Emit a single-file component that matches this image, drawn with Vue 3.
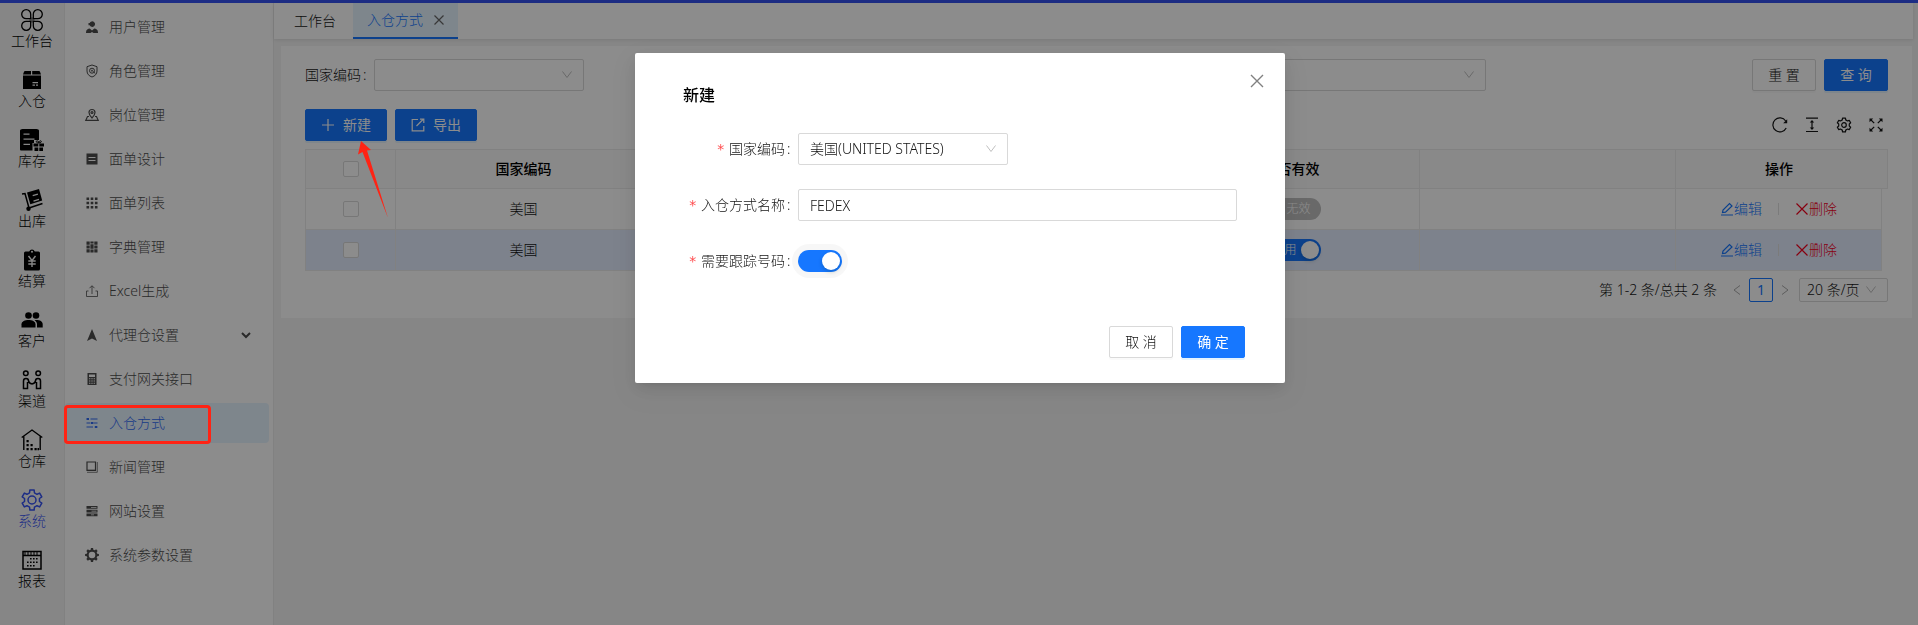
<script setup>
import { ref } from 'vue'

function gear(c, teeth, outer, inner) {
  const pts = []
  const step = (Math.PI * 2) / teeth
  for (let i = 0; i < teeth; i++) {
    const a = i * step - Math.PI / 2
    for (const [offset, r] of [[-0.31, inner], [-0.2, outer], [0.2, outer], [0.31, inner]]) {
      const t = a + offset * step
      pts.push(`${(c + r * Math.cos(t)).toFixed(2)} ${(c + r * Math.sin(t)).toFixed(2)}`)
    }
  }
  return `M${pts.join('L')}Z`
}

const railItems = [
  {
    label: '工作台',
    icon: '<g fill="none" stroke="currentColor" stroke-width="1.3"><path d="M9.700 9.700H5.300a4.500 4.500 0 1 1 4.400-4.400z"/><path d="M12.300 9.700V5.300a4.500 4.500 0 1 1 4.400 4.400z"/><path d="M12.300 12.300h4.400a4.500 4.500 0 1 1-4.400 4.400z"/><path d="M9.700 12.300v4.400a4.500 4.500 0 1 1-4.400-4.400z"/></g><path d="M8.500 11h5M11 8.500v5" stroke="currentColor" stroke-width="2" opacity=".4"/>'
  },
  {
    label: '入仓',
    icon: '<path fill="currentColor" fill-rule="evenodd" d="M4 2h6v3.500H2L3 2.700Q3.300 2 4 2zM11.200 2H18q.7 0 1 .7l1 2.800h-8.800zM2 6.500h18V20H2zM11.500 13v1.200H17V13zm0 2.600v1.200H14v-1.200zm3.500 0v1.200h2v-1.200z"/>'
  },
  {
    label: '库存',
    icon: '<path fill="currentColor" fill-rule="evenodd" d="M1.500 0h14Q18 0 18 1.500V11h-5v3h-1.500v7.500H0q-1 0-1-1V1.500Q-1 0 1.500 0zM2.500 4.500v1.300h6V4.500zm0 5v1.300h11V9.500zm0 5.200V16H9v-1.300z"/><path fill="currentColor" d="M12.500 14.500h4.800v3h-4.800zM18.300 14.500H23v3h-4.700zM13.500 18.400h3.800V22h-3.800zM18.300 18.400H22V22h-3.700z"/><path d="M17.800 14c-3.500 0-3-3-.9-2 .8.500.9 2 .9 2s.1-1.500.9-2c2.100-1 2.600 2-.9 2z" fill="none" stroke="currentColor"/>'
  },
  {
    label: '出库',
    icon: '<g fill="none" stroke="currentColor" stroke-width="1.500"><path d="M1 5l3-.5 4 14.500"/><path d="M8 19l13.500-4.500"/></g><circle cx="7.500" cy="19.700" r="2.200" fill="currentColor"/><path fill="currentColor" fill-rule="evenodd" d="M6 3.500L18 0l3.200 11.500L9.300 15.200zM11.500 6l.4 1.300 5.200-1.600-.4-1.300zM12.300 11.500l.4 1.200 5.500-1.700-.4-1.200z"/>'
  },
  {
    label: '结算',
    icon: '<path fill="currentColor" d="M4.500 2.500h3.700a3 3 0 0 1 5.600 0h3.700q1.500 0 1.500 1.500v16q0 1.500-1.500 1.500h-13Q3 21.500 3 20V4q0-1.500 1.500-1.500z"/><circle cx="11" cy="2.700" r="1" fill="#f5f5f5"/><path d="M7.500 7l3.500 4.500L14.500 7M11 11.500V18M7.300 12h7.400M7.300 15h7.400" fill="none" stroke="#f5f5f5" stroke-width="1.400"/>'
  },
  {
    label: '客户',
    icon: '<g fill="currentColor"><circle cx="7.500" cy="6.500" r="3.300"/><circle cx="15" cy="6.500" r="3.300"/><path d="M.5 18.500v-3.300c0-5.600 14-5.600 14 0v3.300z"/><path d="M13.500 11.200c4.600-.6 8.200 1 8.200 4v3.300H16v-3.300c0-1.700-1-3.100-2.500-4z"/></g>'
  },
  {
    label: '渠道',
    icon: '<g fill="none" stroke="currentColor" stroke-width="1.500"><circle cx="4.800" cy="4.300" r="2.300"/><circle cx="17.200" cy="4.300" r="2.300"/><path d="M6.500 13v6.500h-4V12c0-3.300 5-3.300 5 0 .4 2 1.500 2.500 3.500 3M15.500 13v6.500h4V12c0-3.300-5-3.300-5 0-.4 2-1.500 2.500-3.500 3"/></g>'
  },
  {
    label: '仓库',
    icon: '<path d="M.7 8.500L11 1l10.300 7.500M2.800 7.500V21M19.200 7.500V21" fill="none" stroke="currentColor" stroke-width="1.400"/><path fill="currentColor" d="M5.500 11h2.200v2.200H5.500zM5.500 15h2.200v2.200H5.500zM9.500 15h2.200v2.200H9.500zM5.500 19h2.200v2.200H5.500zM9.500 19h2.200v2.200H9.500zM13.500 19h2.200v2.200h-2.200zM16.500 19H18v2.200h-1.500z"/>'
  },
  {
    label: '系统',
    active: true,
    icon: `<g fill="none" stroke="currentColor" stroke-width="1.500" stroke-linejoin="round"><path d="${gear(11, 6, 10.3, 7.6)}"/><circle cx="11" cy="11" r="4"/></g>`
  },
  {
    label: '报表',
    icon: '<g fill="none" stroke="currentColor" stroke-width="1.500"><path d="M2 2.500h18v17.500H2zM2 6.500h18"/><path d="M4 3v3M7 3v3M10 3v3M13 3v3M16 3v3" stroke-width="1"/></g><path fill="currentColor" d="M9 9h1.600v1.600H9zM12 9h1.600v1.600H12zM15 9h1.600v1.600H15zM6 12.500h1.600v1.600H6zM9 12.500h1.600v1.600H9zM12 12.500h1.600v1.600H12zM15 12.500h1.600v1.600H15zM6 16h1.600v1.600H6zM9 16h1.600v1.600H9zM12 16h1.600v1.600H12z"/>'
  }
]

const menuItems = [
  {
    label: '用户管理',
    icon: '<path fill="currentColor" d="M3.500 3h1.200a2.800 2.800 0 1 1 0 2.200H3.500zM1 12.500c0-3 2-4 3.700-4L7 10.500l2.300-2c1.700 0 3.700 1 3.700 4v.5H8.500l-1.500-1-1.500 1H1z"/>'
  },
  {
    label: '角色管理',
    icon: '<g fill="none" stroke="currentColor"><path d="M7 1l5 1.700V7c0 3-2 5-5 6-3-1-5-3-5-6V2.700z"/><circle cx="7" cy="6.700" r="2.500"/><circle cx="7" cy="6.700" r=".6"/><path d="M8.500 7.500l1.500 2"/></g>'
  },
  {
    label: '岗位管理',
    icon: '<g fill="none" stroke="currentColor" stroke-width="1.200"><path d="M7 10C4.500 7.500 4 6 4 4.500a3 3 0 0 1 6 0C10 6 9.500 7.500 7 10z"/><circle cx="7" cy="4.500" r="1"/><path d="M4 8.500H2.500L.8 12.300h12.400l-1.700-3.800H10"/></g>'
  },
  {
    label: '面单设计',
    icon: '<path fill="currentColor" fill-rule="evenodd" d="M1.500 1.500h11v11h-11zM3.500 5v1h7V5zm0 3v1h7V8z"/>'
  },
  {
    label: '面单列表',
    icon: '<path fill="currentColor" d="M1.500 1.500h2.600v2.600H1.500zM5.700 1.500h2.600v2.600H5.700zM9.900 1.500h2.600v2.600H9.900zM1.500 5.700h2.600v2.600H1.500zM5.700 5.700h2.600v2.600H5.700zM9.900 5.700h2.600v2.600H9.900zM1.500 9.900h2.600v2.600H1.500zM5.700 9.900h2.600v2.600H5.700zM9.900 9.900h2.600v2.600H9.900z"/>'
  },
  {
    label: '字典管理',
    icon: '<path fill="currentColor" d="M1.500 1.500h3.200v3.200H1.500zM5.400 1.500h3.200v2H5.400zM9.300 1.500h3.200v3.200H9.300zM1.500 5.400h3.200v3.200H1.500zM5.400 4.300h3.200v4.500H5.400zM9.300 5.400h3.200v3.200H9.300zM1.500 9.300h3.200v3.200H1.500zM5.400 9.600h3.200v2.900H5.400zM9.300 9.300h3.200v3.200H9.300z"/>'
  },
  {
    label: 'Excel生成',
    icon: '<path d="M7 10V2M4.500 4.200L7 1.700l2.500 2.500M3.500 7h-2v5.500h11V7h-2" fill="none" stroke="currentColor" opacity=".8"/>'
  },
  {
    label: '代理仓设置',
    expandable: true,
    icon: '<path fill="currentColor" d="M7 1l5 12-5-2.500L2 13z"/>'
  },
  {
    label: '支付网关接口',
    icon: '<path fill="currentColor" fill-rule="evenodd" d="M2.500 1h9v12h-9zM4 2.500V5h6V2.500zM4 6.300v1h1.400v-1zm2.300 0v1h1.400v-1zm2.300 0v1H10v-1zM4 8.500v1h1.400v-1zm2.300 0v1h1.400v-1zm2.300 0v1H10v-1zM4 10.700v1h1.400v-1zm2.300 0v1h1.400v-1zm2.300 0v1H10v-1z"/>'
  },
  {
    label: '入仓方式',
    active: true,
    icon: '<path d="M1.500 3h2M5.500 3h7M1.500 7h4M8.500 7h4M1.500 11h6.500M10 11h2.500" stroke="currentColor"/><path fill="currentColor" d="M1.700 2h2.300v2H1.700zM6 6h2.300v2H6zM9.800 10h2.300v2H9.800z"/>'
  },
  {
    label: '新闻管理',
    icon: '<path d="M2 2h8.500v8.500H2z" fill="none" stroke="currentColor" stroke-width="1.200"/><path d="M2 12.300h10.300V2M2 10h8.500" fill="none" stroke="currentColor" opacity=".7"/>'
  },
  {
    label: '网站设置',
    icon: '<path fill="currentColor" fill-rule="evenodd" d="M1.500 2h11v2.800h-11zM6 3v.8h5.500V3zM1.500 5.700h11v2.800h-11zM6.500 6.700v.8h5v-.8zM1.500 9.400h11v2.800h-11zM6 10.400v.8h3v-.8z"/>'
  },
  {
    label: '系统参数设置',
    icon: `<path fill="currentColor" fill-rule="evenodd" d="${gear(7, 8, 7, 5.4)}M7 3.700a3.300 3.300 0 1 0 0 6.600a3.300 3.300 0 1 0 0-6.600Z"/>`
  }
]

const rows = ref([
  { id: 1, country: '美国', enabled: false },
  { id: 2, country: '美国', enabled: true }
])

const form = ref({ country: 'US', name: 'FEDEX', tracking: true })
const toolbarGear = gear(8, 6, 7, 5.4)
</script>

<template>
  <div class="page">
    <div class="topbar"></div>
    <div class="shell">
      <nav class="rail" aria-label="主导航">
        <a v-for="item in railItems" :key="item.label" href="#" class="rail-item" :class="{ active: item.active }">
          <svg class="rail-icon" viewBox="0 0 22 22" aria-hidden="true" v-html="item.icon"></svg>
          <span>{{ item.label }}</span>
        </a>
      </nav>

      <nav class="menu" aria-label="系统菜单">
        <a v-for="item in menuItems" :key="item.label" href="#" class="menu-item" :class="{ active: item.active }">
          <svg class="menu-icon" viewBox="0 0 14 14" aria-hidden="true" v-html="item.icon"></svg>
          <span class="menu-label">{{ item.label }}</span>
          <svg v-if="item.expandable" class="menu-arrow" viewBox="0 0 10 10" aria-hidden="true">
            <path d="M1 3l4 4 4-4" fill="none" stroke="currentColor" stroke-width="2" />
          </svg>
        </a>
      </nav>

      <main class="main">
        <div class="tabs">
          <a href="#" class="tab">工作台</a>
          <div class="tab tab-active">
            <a href="#">入仓方式</a>
            <button type="button" class="tab-close" aria-label="关闭标签">
              <svg viewBox="0 0 10 10"><path d="M.5 .5l9 9M9.500 .5l-9 9" stroke="currentColor" stroke-width="1.200" /></svg>
            </button>
          </div>
        </div>

        <section class="card">
          <form class="filters" @submit.prevent>
            <div class="field">
              <label for="filter-country">国家编码</label><span class="colon">:</span>
              <div class="select-box">
                <select id="filter-country"><option value=""></option></select>
                <svg class="chevron" viewBox="0 0 10 8"><path d="M.5 .5L5 6.500 9.500 .5" /></svg>
              </div>
            </div>
            <div class="select-box filter-second">
              <select aria-label="是否有效"><option value=""></option></select>
              <svg class="chevron" viewBox="0 0 10 8"><path d="M.5 .5L5 6.500 9.500 .5" /></svg>
            </div>
            <div class="buttons">
              <button type="reset" class="btn">重 置</button>
              <button type="submit" class="btn primary">查 询</button>
            </div>
          </form>

          <div class="toolbar">
            <div class="buttons">
              <button type="button" class="btn primary with-icon">
                <svg viewBox="0 0 14 14"><path d="M7 1v12M1 7h12" /></svg>新建
              </button>
              <button type="button" class="btn primary with-icon">
                <svg viewBox="0 0 14 14"><path d="M7 1.500H1.200v11.300h11.600V8M5.500 8l6.500-6.500M9 1.200h3.800V5" /></svg>导出
              </button>
            </div>
            <div class="tools">
              <button type="button" aria-label="刷新">
                <svg viewBox="0 0 16 16"><path d="M14.200 11A7 7 0 1 1 13.700 4" /><path d="M15.200 2.200v4h-4z" fill="currentColor" stroke="none" /></svg>
              </button>
              <button type="button" aria-label="密度">
                <svg viewBox="0 0 16 16"><path d="M2 1.200h12M2 14.500h12M8 4v8" /><path d="M5.800 5.500L8 3l2.200 2.500zM5.800 10.500L8 13l2.200-2.500z" fill="currentColor" stroke="none" /></svg>
              </button>
              <button type="button" aria-label="列设置">
                <svg viewBox="0 0 16 16"><path :d="toolbarGear" stroke-linejoin="round" /><circle cx="8" cy="8" r="2.300" /></svg>
              </button>
              <button type="button" aria-label="全屏">
                <svg viewBox="0 0 16 16"><path d="M2.500 2.500l3.700 3.700M13.500 2.500L9.800 6.200M2.500 13.500l3.700-3.700M13.500 13.500L9.800 9.800" /><path d="M1.500 1.500h3.700L1.500 5.200zM14.500 1.500v3.700l-3.700-3.700zM1.500 14.500v-3.700l3.700 3.700zM14.500 14.500h-3.700l3.700-3.700z" fill="currentColor" stroke="none" /></svg>
              </button>
            </div>
          </div>

          <table class="table">
            <colgroup>
              <col class="col-check" />
              <col /><col /><col /><col /><col />
              <col class="col-actions" />
              <col class="col-gutter" />
            </colgroup>
            <thead>
              <tr>
                <th><input type="checkbox" class="check" aria-label="全选" /></th>
                <th>国家编码</th>
                <th></th>
                <th></th>
                <th>是否有效</th>
                <th></th>
                <th class="no-line">操作</th>
                <th></th>
              </tr>
            </thead>
            <tbody>
              <tr v-for="row in rows" :key="row.id" :class="{ hovered: row.id === 2 }">
                <td><input type="checkbox" class="check" :aria-label="'选择第 ' + row.id + ' 行'" /></td>
                <td>{{ row.country }}</td>
                <td></td>
                <td></td>
                <td>
                  <label class="switch" :class="{ on: row.enabled }">
                    <input v-model="row.enabled" type="checkbox" role="switch" />
                    <span class="switch-text">{{ row.enabled ? '启用' : '无效' }}</span>
                  </label>
                </td>
                <td></td>
                <td>
                  <div class="actions">
                    <a href="#" class="edit">
                      <svg viewBox="0 0 14 14"><path d="M1 13h12M2.500 10.500L3 8l6.500-6.500L12 4 5.500 10.200z" /></svg>编辑
                    </a>
                    <span class="divider"></span>
                    <a href="#" class="delete">
                      <svg viewBox="0 0 14 14"><path d="M1.500 1.500l11 11M12.500 1.500l-11 11" /></svg>删除
                    </a>
                  </div>
                </td>
                <td class="gutter"></td>
              </tr>
            </tbody>
          </table>

          <div class="pagination">
            <span class="total">第 1-2 条/总共 2 条</span>
            <button type="button" class="page-step" aria-label="上一页">
              <svg viewBox="0 0 8 10"><path d="M7 .5L1 5l6 4.500" /></svg>
            </button>
            <button type="button" class="page-current">1</button>
            <button type="button" class="page-step" aria-label="下一页">
              <svg viewBox="0 0 8 10"><path d="M1 .5L7 5 1 9.500" /></svg>
            </button>
            <div class="select-box page-size">
              <select aria-label="每页条数"><option>20 条/页</option></select>
              <svg class="chevron" viewBox="0 0 10 8"><path d="M.5 .5L5 6.500 9.500 .5" /></svg>
            </div>
          </div>
        </section>
      </main>
    </div>

    <div class="mask">
      <div class="modal" role="dialog" aria-modal="true" aria-labelledby="modal-title">
        <h2 id="modal-title">新建</h2>
        <button type="button" class="modal-close" aria-label="关闭">
          <svg viewBox="0 0 12 12"><path d="M0 0l12 12M12 0L0 12" stroke="currentColor" stroke-width="1.400" /></svg>
        </button>
        <form class="form" @submit.prevent>
          <div class="form-label"><i>*</i><label for="country">国家编码</label><span class="colon">:</span></div>
          <div class="select-box">
            <select id="country" v-model="form.country"><option value="US">美国(UNITED STATES)</option></select>
            <svg class="chevron" viewBox="0 0 10 8"><path d="M.5 .5L5 6.500 9.500 .5" /></svg>
          </div>
          <div class="form-label"><i>*</i><label for="name">入仓方式名称</label><span class="colon">:</span></div>
          <input id="name" v-model="form.name" type="text" class="text-input" />
          <div class="form-label"><i>*</i><label for="tracking">需要跟踪号码</label><span class="colon">:</span></div>
          <div class="switch plain" :class="{ on: form.tracking }">
            <input id="tracking" v-model="form.tracking" type="checkbox" role="switch" />
          </div>
        </form>
        <div class="buttons modal-footer">
          <button type="button" class="btn">取 消</button>
          <button type="button" class="btn primary">确 定</button>
        </div>
      </div>
    </div>

    <div class="callout-box"></div>
    <svg class="callout-arrow" viewBox="0 0 32 80" aria-hidden="true">
      <path d="M4 1L14 10 10 10.500 31 78 5.500 12 1 14.500z" fill="#ff2314" />
    </svg>
  </div>
</template>

<style>
body {
  margin: 0;
}
</style>

<style scoped>
.page {
  position: relative;
  display: flex;
  flex-direction: column;
  min-height: 100vh;
  background: #f5f5f5;
  color: #141414;
  font-family: "Noto Sans", "Noto Sans CJK SC", sans-serif;
  font-size: 14px;
  font-weight: 300;
  line-height: 20px;
}
.page * {
  box-sizing: border-box;
}
a {
  color: inherit;
  text-decoration: none;
}
button,
input,
select {
  margin: 0;
  color: inherit;
  font: inherit;
}
button {
  padding: 0;
  border: 0;
  background: none;
}
svg {
  display: block;
  flex: none;
  overflow: visible;
}
.topbar {
  height: 3px;
  background: #3552f2;
}
.shell {
  display: flex;
  flex: 1;
}
.rail {
  width: 64px;
  padding-top: 6px;
  color: #000;
}
.rail-item {
  display: flex;
  flex-direction: column;
  align-items: center;
  height: 60px;
}
.rail-item.active {
  color: #3552f2;
}
.rail-icon {
  width: 22px;
  height: 22px;
}
.menu {
  width: 210px;
  padding: 4px 4px 0 0;
  border: solid #ebebeb;
  border-width: 0 1px;
  background: #fff;
}
.menu-item {
  display: flex;
  align-items: center;
  height: 40px;
  margin-bottom: 4px;
  padding: 0 18px 0 20px;
  border-radius: 4px;
  color: #4d4d4d;
}
.menu-item.active {
  background: #e6f4ff;
  color: #2f6af5;
}
.menu-icon {
  width: 14px;
  height: 14px;
  margin-right: 10px;
}
.menu-label {
  flex: 1;
}
.menu-arrow {
  width: 10px;
  height: 10px;
}
.main {
  flex: 1;
  min-width: 0;
  padding-right: 5px;
}
.tabs {
  display: flex;
  height: 36px;
  background: #fff;
  box-shadow: 0 1px 4px rgba(0, 0, 0, 0.1);
}
.tab {
  display: flex;
  align-items: center;
  padding: 0 17px 0 20px;
}
.tab-active {
  gap: 11px;
  padding: 0 14px;
  border-bottom: 2px solid #1677ff;
  background: #e6f4ff;
  color: #1677ff;
}
.tab-close {
  color: #666;
}
.tab-close svg {
  width: 10px;
  height: 10px;
}
.card {
  margin: 7px 1px 0 7px;
  padding: 13px 24px 16px;
  background: #fff;
}
.filters {
  display: flex;
  align-items: center;
}
.field {
  display: flex;
  align-items: center;
}
.colon {
  width: 13px;
  padding-left: 2px;
}
.select-box {
  position: relative;
  width: 210px;
}
.select-box select {
  display: block;
  appearance: none;
  width: 100%;
  height: 32px;
  padding: 0 28px 0 11px;
  border: 1px solid #d9d9d9;
  border-radius: 2px;
  background: #fff;
}
.chevron {
  position: absolute;
  top: 50%;
  right: 12px;
  width: 10px;
  height: 8px;
  margin-top: -4px;
  pointer-events: none;
}
.chevron path {
  fill: none;
  stroke: #bfbfbf;
}
.filter-second {
  margin: 0 auto 0 692px;
}
.buttons {
  display: flex;
  gap: 8px;
}
.btn {
  display: flex;
  align-items: center;
  justify-content: center;
  width: 64px;
  height: 32px;
  border: 1px solid #d9d9d9;
  border-radius: 2px;
  background: #fff;
  box-shadow: 0 2px 0 rgba(0, 0, 0, 0.02);
}
.btn.primary {
  border-color: #1677ff;
  background: #1677ff;
  box-shadow: 0 2px 0 rgba(5, 145, 255, 0.1);
  color: #fff;
  font-weight: 400;
}
.btn.with-icon {
  gap: 8px;
  width: 82px;
}
.btn svg {
  width: 14px;
  height: 14px;
  fill: none;
  stroke: currentColor;
  stroke-width: 1.2;
}
.toolbar {
  display: flex;
  align-items: center;
  justify-content: space-between;
  margin: 18px 0 8px;
}
.tools {
  display: flex;
  gap: 16px;
  margin-right: 4px;
}
.tools svg {
  width: 16px;
  height: 16px;
  fill: none;
  stroke: currentColor;
  stroke-width: 1.2;
}
.table {
  width: 100%;
  table-layout: fixed;
  border-spacing: 0;
  border-top: 1px solid #ebebeb;
  border-left: 1px solid #ebebeb;
  text-align: center;
}
.col-check {
  width: 90px;
}
.col-actions {
  width: 206px;
}
.col-gutter {
  width: 6px;
}
th,
td {
  height: 41px;
  padding: 0;
  border: solid #ebebeb;
  border-width: 0 1px 1px 0;
}
th {
  height: 39px;
  background: #fafafa;
  color: #000;
  font-weight: 500;
}
th.no-line {
  border-right: 0;
}
td.gutter {
  border: 0;
}
.hovered td:not(.gutter) {
  background: #e4edff;
}
.check {
  display: block;
  appearance: none;
  width: 16px;
  height: 16px;
  margin: 0 auto;
  border: 1px solid #d9d9d9;
  border-radius: 2px;
  background: #fff;
}
.switch {
  position: relative;
  display: inline-flex;
  align-items: center;
  height: 22px;
  padding: 0 10px 0 24px;
  border-radius: 11px;
  background: #bfbfbf;
  color: #fff;
  font-size: 12px;
  vertical-align: middle;
}
.switch.on {
  padding: 0 24px 0 10px;
  background: #1677ff;
}
.switch::after {
  content: "";
  position: absolute;
  top: 2px;
  left: 2px;
  width: 18px;
  height: 18px;
  border-radius: 9px;
  background: #fff;
  box-shadow: 0 2px 4px rgba(0, 35, 11, 0.2);
  pointer-events: none;
}
.switch.on::after {
  right: 2px;
  left: auto;
}
.switch input {
  position: absolute;
  inset: 0;
  width: 100%;
  height: 100%;
  opacity: 0;
}
.switch.plain {
  align-self: center;
  width: 44px;
  box-shadow: 0 0 0 6px rgba(0, 0, 0, 0.03);
}
.actions {
  display: flex;
  align-items: center;
  justify-content: center;
}
.actions a {
  display: flex;
  align-items: center;
}
.actions svg {
  width: 14px;
  height: 14px;
  fill: none;
  stroke: currentColor;
  stroke-width: 1.2;
}
.edit {
  color: #1677ff;
}
.delete {
  color: #f5001d;
}
.divider {
  width: 1px;
  height: 12px;
  margin: 0 16px;
  background: #e0e0e0;
}
.pagination {
  display: flex;
  align-items: center;
  justify-content: flex-end;
  height: 24px;
  margin-top: 7px;
}
.total {
  margin-right: 8px;
}
.page-step {
  display: flex;
  align-items: center;
  justify-content: center;
  width: 24px;
  height: 24px;
}
.page-step svg {
  width: 8px;
  height: 10px;
  fill: none;
  stroke: #aaa;
}
.page-current {
  width: 24px;
  height: 24px;
  border: 1px solid #1677ff;
  border-radius: 2px;
  color: #1677ff;
  font-weight: 400;
  line-height: 20px;
}
.page-size {
  width: 89px;
  margin-left: 2px;
}
.page-size select {
  height: 24px;
  padding: 0 20px 0 7px;
}
.mask {
  position: fixed;
  inset: 0;
  display: flex;
  align-items: flex-start;
  justify-content: center;
  padding: 53px 0 0 2px;
  background: rgba(0, 0, 0, 0.45);
}
.modal {
  position: relative;
  width: 650px;
  padding: 30px 40px 25px;
  border-radius: 2px;
  background: #fff;
  box-shadow: 0 6px 16px rgba(0, 0, 0, 0.08), 0 3px 6px -4px rgba(0, 0, 0, 0.12),
    0 9px 28px 8px rgba(0, 0, 0, 0.05);
}
.modal h2 {
  margin: 0 8px 26px;
  color: #000;
  font-size: 16px;
  font-weight: 500;
  line-height: 24px;
}
.modal-close {
  position: absolute;
  top: 22px;
  right: 22px;
  color: #808080;
}
.modal-close svg {
  width: 12px;
  height: 12px;
}
.form {
  display: grid;
  grid-template-columns: 115px 1fr;
  grid-auto-rows: 32px;
  row-gap: 24px;
  margin: 0 8px;
}
.form-label {
  display: flex;
  align-items: center;
  justify-content: flex-end;
}
.form-label i {
  margin-right: 4px;
  color: #ff4d4f;
  font-family: "DejaVu Sans Mono", monospace;
  font-style: normal;
}
.text-input {
  width: 100%;
  height: 32px;
  padding: 0 11px;
  border: 1px solid #d9d9d9;
  border-radius: 2px;
  background: #fff;
}
.modal-footer {
  justify-content: flex-end;
  margin-top: 49px;
}
.callout-box {
  position: absolute;
  top: 405px;
  left: 64px;
  width: 147px;
  height: 39px;
  border: 3px solid #ff2314;
  border-radius: 4px;
  pointer-events: none;
}
.callout-arrow {
  position: absolute;
  top: 140px;
  left: 357px;
  width: 32px;
  height: 80px;
  pointer-events: none;
}
</style>
